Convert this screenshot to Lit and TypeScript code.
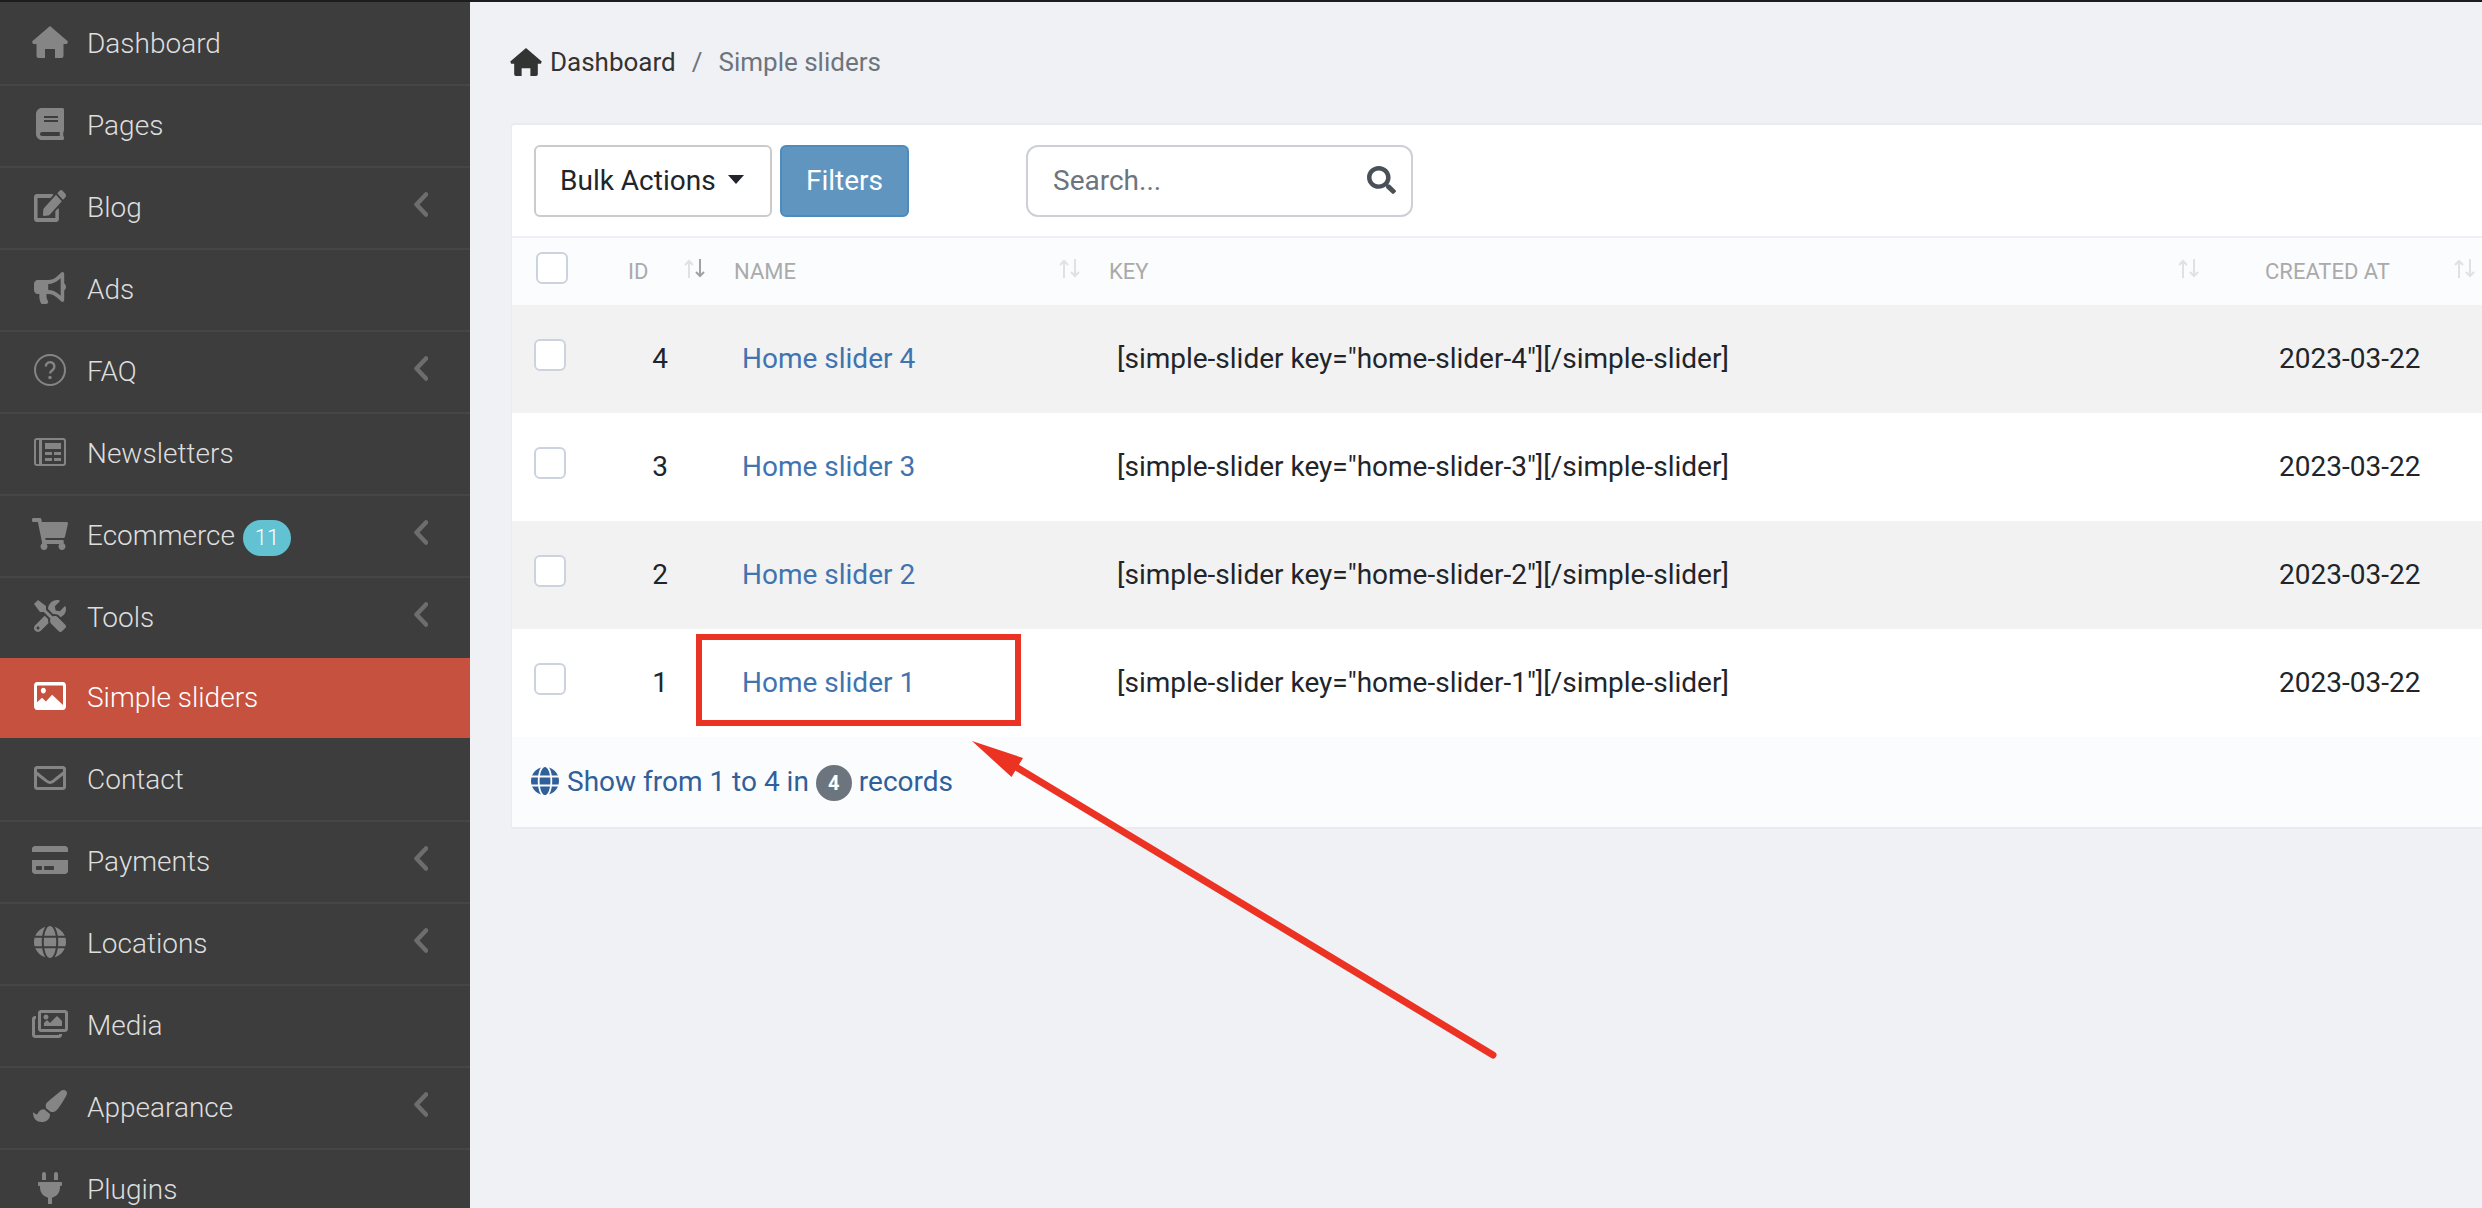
import {LitElement, html, css} from "lit";
import {customElement} from "lit/decorators.js";

const P = {
    home: "M18 0L36 15.5 35 18H31.500V30a2 2 0 0 1-2 2H23V23H13V32H6.500a2 2 0 0 1-2-2V18H1L0 15.500z",
    book: "M448 360V24c0-13.3-10.7-24-24-24H96C43 0 0 43 0 96v320c0 53 43 96 96 96h328c13.3 0 24-10.7 24-24v-16c0-7.500-3.500-14.300-8.900-18.700-4.200-15.400-4.200-59.300 0-74.700 5.400-4.300 8.900-11.100 8.900-18.600zM128 134c0-3.300 2.700-6 6-6h212c3.300 0 6 2.700 6 6v20c0 3.300-2.700 6-6 6H134c-3.300 0-6-2.700-6-6v-20zm0 64c0-3.300 2.700-6 6-6h212c3.300 0 6 2.700 6 6v20c0 3.300-2.700 6-6 6H134c-3.300 0-6-2.700-6-6v-20zm253.400 250H96c-17.700 0-32-14.300-32-32 0-17.600 14.400-32 32-32h285.400c-1.900 17.100-1.900 46.900 0 64z",
    edit: "M402.600 83.200l90.200 90.200c3.800 3.800 3.800 10 0 13.800L274.400 405.600l-92.800 10.300c-12.400 1.400-22.900-9.100-21.500-21.500l10.300-92.800L388.800 83.200c3.800-3.800 10-3.800 13.800 0zm162-22.900l-48.800-48.800c-15.200-15.200-39.900-15.200-55.200 0l-35.400 35.400c-3.800 3.800-3.800 10 0 13.800l90.200 90.200c3.800 3.800 10 3.800 13.800 0l35.400-35.400c15.200-15.300 15.200-40 0-55.200zM384 346.200V448H64V128h229.800c3.200 0 6.200-1.300 8.500-3.500l40-40c7.600-7.600 2.200-20.500-8.500-20.500H48C21.500 64 0 85.500 0 112v352c0 26.500 21.500 48 48 48h352c26.500 0 48-21.500 48-48V306.200c0-10.700-12.900-16-20.500-8.500l-40 40c-2.200 2.300-3.500 5.300-3.500 8.500z",
    bullhorn: "M576 240c0-23.630-12.950-44.040-32-55.120V32.010C544 23.260 537.020 0 512 0c-7.120 0-14.190 2.380-19.980 7.020l-85.030 68.030C364.280 109.190 310.660 128 256 128H64c-35.350 0-64 28.650-64 64v96c0 35.350 28.650 64 64 64h33.700c-1.390 10.480-2.180 21.140-2.180 32 0 39.770 9.260 77.350 25.560 110.940 5.190 10.690 16.520 17.060 28.400 17.060h74.280c26.050 0 41.690-29.840 25.900-50.560-16.400-21.520-26.150-48.360-26.150-77.440 0-11.110 1.620-21.790 4.410-32H256c54.660 0 108.280 18.810 150.980 52.950l85.030 68.030a32.023 32.023 0 0 0 19.980 7.020c24.920 0 32-22.780 32-32V295.130C563.050 284.040 576 263.630 576 240zm-96 141.420l-33.050-26.440C392.950 311.780 325.120 288 256 288v-96c69.120 0 136.950-23.780 190.950-66.980L480 98.580v282.840z",
    cart: "M528.120 301.319l47.273-208C578.806 78.301 567.391 64 551.990 64H159.208l-9.166-44.810C147.758 8.021 137.930 0 126.529 0H24C10.745 0 0 10.745 0 24v16c0 13.255 10.745 24 24 24h69.883l70.248 343.435C147.325 417.100 136 435.222 136 456c0 30.928 25.072 56 56 56s56-25.072 56-56c0-15.674-6.447-29.835-16.824-40h209.647C430.447 426.165 424 440.326 424 456c0 30.928 25.072 56 56 56s56-25.072 56-56c0-22.172-12.888-41.332-31.579-50.405l5.517-24.276c3.413-15.018-8.002-29.319-23.403-29.319H218.117l-6.545-32h293.145c11.206 0 20.920-7.754 23.403-18.681z",
    tools: "M501.100 395.700L384 278.600c-23.100-23.100-57.600-27.600-85.400-13.900L192 158.100V96L64 0 0 64l96 128h62.100l106.600 106.600c-13.600 27.800-9.200 62.300 13.900 85.400l117.100 117.100c14.600 14.600 38.200 14.600 52.700 0l52.700-52.700c14.500-14.600 14.500-38.200 0-52.700zM331.700 225c28.300 0 54.900 11 74.900 31l19.400 19.400c15.800-6.900 30.800-16.500 43.800-29.500 37.100-37.100 49.700-89.300 37.900-136.700-2.200-9-13.500-12.100-20.100-5.500l-74.400 74.400-67.900-11.300L334 98.900l74.400-74.400c6.600-6.600 3.400-17.900-5.700-20.200-47.400-11.700-99.600.9-136.600 37.900-28.500 28.500-41.900 66.100-41.200 103.600l82.100 82.100c8.100-1.900 16.500-2.900 24.700-2.900zm-103.900 82l-56.700-56.700L18.700 402.800c-25 25-25 65.500 0 90.500s65.500 25 90.500 0l123.600-123.600c-7.600-19.900-9.900-41.600-5-62.700zM64 472c-13.200 0-24-10.800-24-24 0-13.300 10.700-24 24-24s24 10.700 24 24c0 13.200-10.700 24-24 24z",
    image: "M464 64H48C21.490 64 0 85.490 0 112v288c0 26.510 21.490 48 48 48h416c26.510 0 48-21.490 48-48V112c0-26.510-21.490-48-48-48zm-6 336H54a6 6 0 0 1-6-6V118a6 6 0 0 1 6-6h404a6 6 0 0 1 6 6v276a6 6 0 0 1-6 6zM150 142c-22.091 0-40 17.909-40 40s17.909 40 40 40 40-17.909 40-40-17.909-40-40-40zM48 400V340l80-60 62 50 100-90 174 140v20z",
    envelope: "M464 64H48C21.490 64 0 85.490 0 112v288c0 26.510 21.490 48 48 48h416c26.510 0 48-21.490 48-48V112c0-26.510-21.490-48-48-48zm0 48v40.805c-22.422 18.259-58.168 46.651-134.587 106.490-16.841 13.247-50.201 45.072-73.413 44.701-23.208.375-56.579-31.459-73.413-44.701C106.180 199.465 70.425 171.067 48 152.805V112h416zM48 400V214.398c22.914 18.251 55.409 43.862 104.938 82.646 21.857 17.205 60.134 55.186 103.062 54.955 42.717.231 80.509-37.199 103.053-54.947 49.528-38.783 82.032-64.401 104.947-82.653V400H48z",
    card: "M0 432c0 26.500 21.500 48 48 48h480c26.500 0 48-21.500 48-48V256H0v176zm192-68c0-6.600 5.400-12 12-12h136c6.600 0 12 5.400 12 12v40c0 6.600-5.400 12-12 12H204c-6.600 0-12-5.400-12-12v-40zm-128 0c0-6.600 5.400-12 12-12h72c6.600 0 12 5.400 12 12v40c0 6.600-5.400 12-12 12H76c-6.600 0-12-5.400-12-12v-40zM576 80v48H0V80c0-26.500 21.500-48 48-48h480c26.500 0 48 21.500 48 48z",
    globe: "M336.500 160C322 70.700 287.800 8 248 8s-74 62.700-88.500 152h177zM152 256c0 22.200 1.200 43.500 3.300 64h185.300c2.100-20.500 3.300-41.800 3.300-64s-1.200-43.500-3.300-64H155.300c-2.100 20.500-3.300 41.800-3.300 64zm324.700-96c-28.600-67.900-86.500-120.400-158-141.600 24.400 33.800 41.200 84.700 50 141.600h108zM177.200 18.400C105.800 39.600 47.800 92.100 19.300 160h108c8.700-56.900 25.500-107.800 49.900-141.600zM487.400 192H372.700c2.100 21 3.300 42.500 3.300 64s-1.200 43-3.300 64h114.600c5.500-20.500 8.600-41.800 8.600-64s-3.100-43.500-8.500-64zM120 256c0-21.500 1.200-43 3.300-64H8.600C3.200 212.500 0 233.800 0 256s3.200 43.500 8.600 64h114.600c-2-21-3.200-42.500-3.200-64zm39.500 96c14.500 89.300 48.700 152 88.500 152s74-62.700 88.500-152h-177zm159.300 141.600c71.400-21.200 129.400-73.700 158-141.600h-108c-8.800 56.900-25.600 107.800-50 141.600zM19.300 352c28.600 67.900 86.500 120.400 158 141.600-24.400-33.800-41.200-84.700-50-141.600h-108z",
    images: "M480 416v16c0 26.510-21.490 48-48 48H48c-26.510 0-48-21.490-48-48V176c0-26.510 21.490-48 48-48h16v48H54a6 6 0 0 0-6 6v244a6 6 0 0 0 6 6h372a6 6 0 0 0 6-6v-10h48zm42-336H150a6 6 0 0 0-6 6v244a6 6 0 0 0 6 6h372a6 6 0 0 0 6-6V86a6 6 0 0 0-6-6zm6-48c26.510 0 48 21.490 48 48v256c0 26.510-21.490 48-48 48H144c-26.510 0-48-21.490-48-48V80c0-26.510 21.490-48 48-48h384zM264 144c0 22.091-17.909 40-40 40s-40-17.909-40-40 17.909-40 40-40 40 17.909 40 40zm-72 96l39.515-39.515c4.686-4.686 12.284-4.686 16.971 0L288 240l103.515-103.515c4.686-4.686 12.284-4.686 16.971 0L480 208v80H192v-48z",
    brush: "M167.020 309.340c-40.120 2.580-76.530 17.860-97.190 72.300-2.350 6.210-8 9.980-14.590 9.980-11.110 0-45.460-27.670-55.250-34.350C0 439.620 37.930 512 128 512c75.860 0 128-43.770 128-120.190 0-3.110-.65-6.080-.97-9.130l-88.010-73.340zM457.890 0c-15.160 0-29.370 6.710-40.210 16.450C213.270 199.050 192 203.340 192 257.090c0 13.700 3.250 26.760 8.730 38.700l63.820 53.180c7.210 1.800 14.640 3.030 22.390 3.030 62.110 0 98.110-45.470 211.160-256.460 7.380-14.350 13.900-29.850 13.900-45.990C512 20.640 486 0 457.890 0z",
    plug: "M320 32a32 32 0 0 0-64 0v96h64Zm48 128H16A16 16 0 0 0 0 176v32a16 16 0 0 0 16 16H32v32A160.070 160.070 0 0 0 160 412.800V512h64V412.800A160.070 160.070 0 0 0 352 256V224h16a16 16 0 0 0 16-16V176A16 16 0 0 0 368 160ZM128 32a32 32 0 0 0-64 0v96h64Z",
    search: "M505 442.700L405.300 343c-4.500-4.500-10.600-7-17-7H372c27.600-35.300 44-79.700 44-128C416 93.100 322.900 0 208 0S0 93.100 0 208s93.100 208 208 208c48.300 0 92.700-16.400 128-44v16.300c0 6.400 2.500 12.500 7 17l99.700 99.700c9.400 9.400 24.600 9.400 33.900 0l28.300-28.300c9.400-9.400 9.400-24.600.1-34zM208 336c-70.700 0-128-57.200-128-128 0-70.700 57.200-128 128-128 70.700 0 128 57.200 128 128 0 70.700-57.200 128-128 128z",
};

const homeIcon = (w: number, h: number) => html`<svg width=${w} height=${h} viewBox="0 0 36 32" fill="currentColor"><path d=${P.home}/></svg>`;

const glyph = (d: string, box: string, w: number, h: number) =>
    html`<svg width=${w} height=${h} viewBox=${box} fill="currentColor" preserveAspectRatio="none"><path d=${d}/></svg>`;

// newspaper in the reference has a different inner layout from the stock glyph
const newspaper = html`<svg width="32" height="28" viewBox="0 0 32 28" fill="currentColor">
    <path fill-rule="evenodd" d="M3 0H29a3 3 0 0 1 3 3V25a3 3 0 0 1-3 3H3a3 3 0 0 1-3-3V3a3 3 0 0 1 3-3ZM2 3V25a1 1 0 0 0 1 1H5V2H3a1 1 0 0 0-1 1ZM8 2V26H29a1 1 0 0 0 1-1V3a1 1 0 0 0-1-1Z"/>
    <rect x="11" y="5" width="16" height="6"/><rect x="11" y="14" width="7" height="3"/><rect x="20" y="14" width="7" height="3"/><rect x="11" y="20" width="7" height="3"/><rect x="20" y="20" width="7" height="3"/>
</svg>`;

// thin ring, the stock question-circle is too heavy here
const question = html`<svg width="32" height="32" viewBox="0 0 32 32" fill="none" stroke="currentColor">
    <circle cx="16" cy="16" r="15" stroke-width="2"/>
    <path d="M11.800 12.500a4.300 4.300 0 1 1 6.800 3.500c-1.600 1.100-2.600 1.700-2.600 3.400" stroke-width="2.400"/>
    <circle cx="16" cy="23.500" r="1.700" fill="currentColor" stroke="none"/>
</svg>`;

const menu = [
    {label: "Dashboard", icon: homeIcon(36, 32)},
    {label: "Pages", icon: glyph(P.book, "0 0 448 512", 28, 32)},
    {label: "Blog", icon: glyph(P.edit, "0 0 576 512", 32, 32), more: true},
    {label: "Ads", icon: glyph(P.bullhorn, "0 0 576 512", 32, 32)},
    {label: "FAQ", icon: question, more: true},
    {label: "Newsletters", icon: newspaper},
    {label: "Ecommerce", icon: glyph(P.cart, "0 0 576 512", 36, 32), more: true, badge: "11"},
    {label: "Tools", icon: glyph(P.tools, "0 0 512 512", 32, 32), more: true, cls: "before-active"},
    {label: "Simple sliders", icon: glyph(P.image, "0 64 512 384", 32, 28), cls: "active"},
    {label: "Contact", icon: glyph(P.envelope, "0 64 512 384", 32, 24), cls: "after-active"},
    {label: "Payments", icon: glyph(P.card, "0 32 576 448", 36, 28), more: true},
    {label: "Locations", icon: glyph(P.globe, "0 8 496 496", 32, 32), more: true},
    {label: "Media", icon: glyph(P.images, "0 32 576 448", 36, 28)},
    {label: "Appearance", icon: glyph(P.brush, "0 0 512 512", 34, 32), more: true},
    {label: "Plugins", icon: glyph(P.plug, "0 0 384 512", 24, 32)},
];

const sliders = [4, 3, 2, 1];

@customElement("app-root")
export class AppRoot extends LitElement {
    static styles = css`
        :host {
            display: block;
            height: 1208px;
            overflow: hidden;
            position: relative;
            font-family: Roboto, "Liberation Sans", sans-serif;
            color: #212529;
        }

        .topbar {
            height: 2px;
            background: #1c1c1e;
        }

        .shell {
            display: flex;
            height: 1206px;
        }

        .sidebar {
            width: 470px;
            flex: none;
            padding-top: 2px;
            background: #3d3d3d;
            overflow: hidden;
        }

        .item {
            box-sizing: border-box;
            display: flex;
            align-items: center;
            height: 82px;
            padding-bottom: 2px;
            border-bottom: 2px solid #464646;
            color: #dedede;
            font-size: 28px;
            font-weight: 300;
        }

        .item.before-active {
            height: 80px;
            border-bottom: none;
        }

        .item.active {
            height: 80px;
            border-bottom: none;
            background: #c6513f;
            color: #fff;
        }

        .item.after-active {
            height: 84px;
            padding-bottom: 0;
        }

        .icon {
            width: 36px;
            margin-left: 32px;
            margin-right: 19px;
            flex: none;
            display: flex;
            justify-content: center;
            align-items: center;
            color: #858585;
            margin-bottom: 2px;
        }

        .active .icon {
            color: #fff;
        }

        .badge {
            margin-left: 8px;
            margin-top: 6px;
            width: 48px;
            height: 36px;
            border-radius: 18px;
            background: #63c2d2;
            color: #fff;
            font-size: 22px;
            line-height: 36px;
            text-align: center;
        }

        .chevron {
            margin-left: auto;
            margin-right: 42px;
            margin-bottom: 6px;
            color: #6d6d6d;
        }

        .main {
            flex: 1;
            min-width: 0;
            background: #f0f1f5;
            padding-left: 41px;
        }

        .crumbs {
            box-sizing: border-box;
            height: 121px;
            padding-bottom: 2px;
            display: flex;
            align-items: center;
            font-size: 26px;
            color: #333;
        }

        .crumbs svg {
            margin-left: -1px;
            margin-right: 8px;
            color: #333;
        }

        .crumbs .sep {
            margin: 0 16px;
            color: #6c757d;
        }

        .crumbs .current {
            color: #6c757d;
        }

        .card {
            background: #fff;
            border-top: 2px solid #e9ebf0;
            border-left: 1px solid #e9ebf0;
            border-bottom: 2px solid #e9ebf0;
            border-top-left-radius: 4px;
        }

        .toolbar {
            height: 113px;
            box-sizing: border-box;
            padding-top: 20px;
            display: flex;
            align-items: flex-start;
            border-bottom: 2px solid #eff0f4;
        }

        .btn {
            box-sizing: border-box;
            height: 72px;
            padding-bottom: 2px;
            border-radius: 6px;
            font-size: 28px;
            display: flex;
            align-items: center;
        }

        .bulk {
            width: 238px;
            margin-left: 22px;
            padding-left: 24px;
            border: 2px solid #cbcbcb;
            background: #fff;
        }

        .caret {
            margin-left: 12px;
            width: 0;
            height: 0;
            border-left: 8px solid transparent;
            border-right: 8px solid transparent;
            border-top: 9px solid #212529;
            margin-bottom: 2px;
        }

        .filters {
            width: 129px;
            margin-left: 8px;
            justify-content: center;
            border: 2px solid #4e8bbd;
            background: #6095c0;
            color: #fff;
        }

        .search {
            box-sizing: border-box;
            width: 387px;
            height: 72px;
            margin-left: 117px;
            padding: 0 15px 2px 25px;
            display: flex;
            align-items: center;
            justify-content: space-between;
            border: 2px solid #cdd1d6;
            border-radius: 12px;
            font-size: 28px;
            color: #6c757d;
        }

        .search svg {
            color: #495057;
        }

        .row {
            display: grid;
            grid-template-columns: 109px 105px 376px 1155px 1fr;
            align-items: center;
        }

        .head {
            height: 67px;
            background: #fbfcfe;
            font-size: 22px;
            color: #aaa;
        }

        .th {
            display: flex;
            align-items: center;
            justify-content: space-between;
            height: 100%;
        }

        .th svg {
            margin-bottom: 7px;
        }

        .th.id {
            padding: 0 21px 0 7px;
        }

        .th.name {
            padding: 0 22px 0 8px;
        }

        .th.key {
            padding: 0 58px 0 7px;
        }

        .th.created {
            padding: 0 7px 0 8px;
        }

        .check {
            box-sizing: border-box;
            width: 32px;
            height: 32px;
            margin-left: 22px;
            margin-bottom: 8px;
            border: 2px solid #cdd3de;
            border-radius: 6px;
            background: #fff;
        }

        .head .check {
            margin-left: 24px;
        }

        .data {
            box-sizing: border-box;
            height: 108px;
            padding-bottom: 2px;
            font-size: 28px;
            background: #fff;
        }

        .data .check {
            margin-bottom: 6px;
        }

        .data:nth-of-type(odd) {
            background: #f2f2f2;
        }

        .cell-id {
            text-align: right;
            padding-right: 58px;
        }

        .cell-name {
            padding-left: 16px;
            color: #3f74b0;
        }

        .cell-key {
            padding-left: 15px;
        }

        .cell-date {
            padding-left: 22px;
        }

        .foot {
            box-sizing: border-box;
            height: 90px;
            padding: 0 0 2px 19px;
            display: flex;
            align-items: center;
            background: #fbfcfe;
            font-size: 28px;
            color: #2f6099;
        }

        .foot svg {
            margin-right: 8px;
        }

        .count {
            margin: 4px 7px 0 7px;
            width: 36px;
            height: 36px;
            border-radius: 50%;
            background: #6c757d;
            color: #fff;
            font-size: 20px;
            font-weight: 700;
            line-height: 36px;
            text-align: center;
        }

        .marks {
            position: absolute;
            left: 0;
            top: 0;
            pointer-events: none;
        }
    `;

    private sortIcon(active = false) {
        return html`<svg width="21" height="19" viewBox="0 0 21 19" fill="none" stroke-width="2">
            <path d="M5 19V2M1 6l4-4 4 4" stroke="#dfe1e4"/>
            <path d="M16 0v17M12 13l4 4 4-4" stroke=${active ? "#a0a3a6" : "#dfe1e4"}/>
        </svg>`;
    }

    override render() {
        return html`
            <div class="topbar"></div>
            <div class="shell">
                <nav class="sidebar">
                    ${menu.map((m) => html`
                        <div class="item ${m.cls ?? ""}">
                            <span class="icon">${m.icon}</span>
                            <span>${m.label}</span>
                            ${m.badge ? html`<span class="badge">${m.badge}</span>` : ""}
                            ${m.more ? html`<svg class="chevron" width="14" height="25" viewBox="0 0 14 25" fill="none" stroke="currentColor" stroke-width="4.500" stroke-linecap="round" stroke-linejoin="round"><path d="M12 2.500L2.500 12.500l9.500 10"/></svg>` : ""}
                        </div>
                    `)}
                </nav>
                <main class="main">
                    <div class="crumbs">
                        ${homeIcon(32, 28)}<span>Dashboard</span><span class="sep">/</span><span class="current">Simple sliders</span>
                    </div>
                    <section class="card">
                        <div class="toolbar">
                            <div class="btn bulk">Bulk Actions<span class="caret"></span></div>
                            <div class="btn filters">Filters</div>
                            <div class="search"><span>Search...</span>${glyph(P.search, "0 0 512 512", 29, 28)}</div>
                        </div>
                        <div class="row head">
                            <div class="check"></div>
                            <div class="th id"><span>ID</span>${this.sortIcon(true)}</div>
                            <div class="th name"><span>NAME</span>${this.sortIcon()}</div>
                            <div class="th key"><span>KEY</span>${this.sortIcon()}</div>
                            <div class="th created"><span>CREATED AT</span>${this.sortIcon()}</div>
                        </div>
                        ${sliders.map((n) => html`
                            <div class="row data">
                                <div class="check"></div>
                                <div class="cell-id">${n}</div>
                                <div class="cell-name">Home slider ${n}</div>
                                <div class="cell-key">[simple-slider key="home-slider-${n}"][/simple-slider]</div>
                                <div class="cell-date">2023-03-22</div>
                            </div>
                        `)}
                        <div class="foot">
                            ${glyph(P.globe, "0 8 496 496", 28, 28)}
                            <span>Show from 1 to 4 in</span><span class="count">4</span><span>records</span>
                        </div>
                    </section>
                </main>
            </div>
            <svg class="marks" width="2482" height="1208" viewBox="0 0 2482 1208" fill="none">
                <rect x="699" y="637" width="319" height="86" stroke="#ec3323" stroke-width="6"/>
                <path d="M1016 767L1493 1055" stroke="#ec3323" stroke-width="7" stroke-linecap="round"/>
                <path d="M972 741L1023 758 1011.500 777Z" fill="#ec3323"/>
            </svg>
        `;
    }
}
